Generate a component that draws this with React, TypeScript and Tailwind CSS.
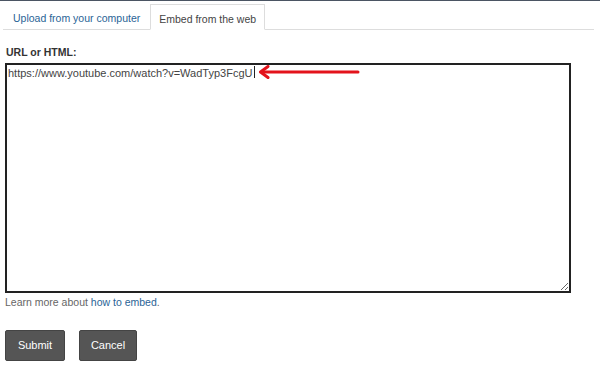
export default function App() {
  return (
    <div className="w-[600px] h-[380px] bg-white border-t border-[#4b5563] font-['Liberation_Sans',Arial,sans-serif] text-[10.5px] text-[#333]">
      <ul className="flex ml-[3px] mr-[6px] mt-[3px] border-b border-[#ddd] h-[26px]">
        <li className="pl-[10px] pr-[10px] pt-[7px] text-[#2a6496]">Upload from your computer</li>
        <li className="px-[8px] pt-[7px] -mb-px bg-white border border-[#ddd] border-b-white text-[#444]">
          Embed from the web
        </li>
      </ul>

      <div className="px-[5px] pt-[16px]">
        <label className="block font-bold text-[#333] leading-[12px] mb-[5px] ml-[1px]">URL or HTML:</label>
        <div className="relative">
          <textarea
            className="block w-[566px] h-[230px] border-2 border-[#222] px-[1px] py-[2px] text-[11px] leading-[12px] text-[#444] outline-none resize-y"
            defaultValue="https://www.youtube.com/watch?v=WadTyp3FcgU"
          />
          <div className="absolute left-[249px] top-[3px] w-px h-[12px] bg-[#222]" />
          <svg className="absolute left-[252px] top-[2px]" width="104" height="14" viewBox="0 0 104 14">
            <path d="M6 7 H101" stroke="#e3131b" strokeWidth="3" strokeLinecap="round" />
            <path d="M11 1.5 L3.5 7 L11 12.5" fill="none" stroke="#e3131b" strokeWidth="3" strokeLinecap="round" strokeLinejoin="round" />
          </svg>
        </div>
        <p className="mt-[2px] leading-[14px] text-[#666]">
          Learn more about <span className="text-[#2a6496]">how to embed</span>.
        </p>
        <div className="flex gap-[14px] mt-[21px]">
          <button className="w-[60px] h-[31px] bg-[#555] text-white text-[11px] rounded-[2px] border border-[#444]">Submit</button>
          <button className="w-[58px] h-[31px] bg-[#555] text-white text-[11px] rounded-[2px] border border-[#444]">Cancel</button>
        </div>
      </div>
    </div>
  );
}
